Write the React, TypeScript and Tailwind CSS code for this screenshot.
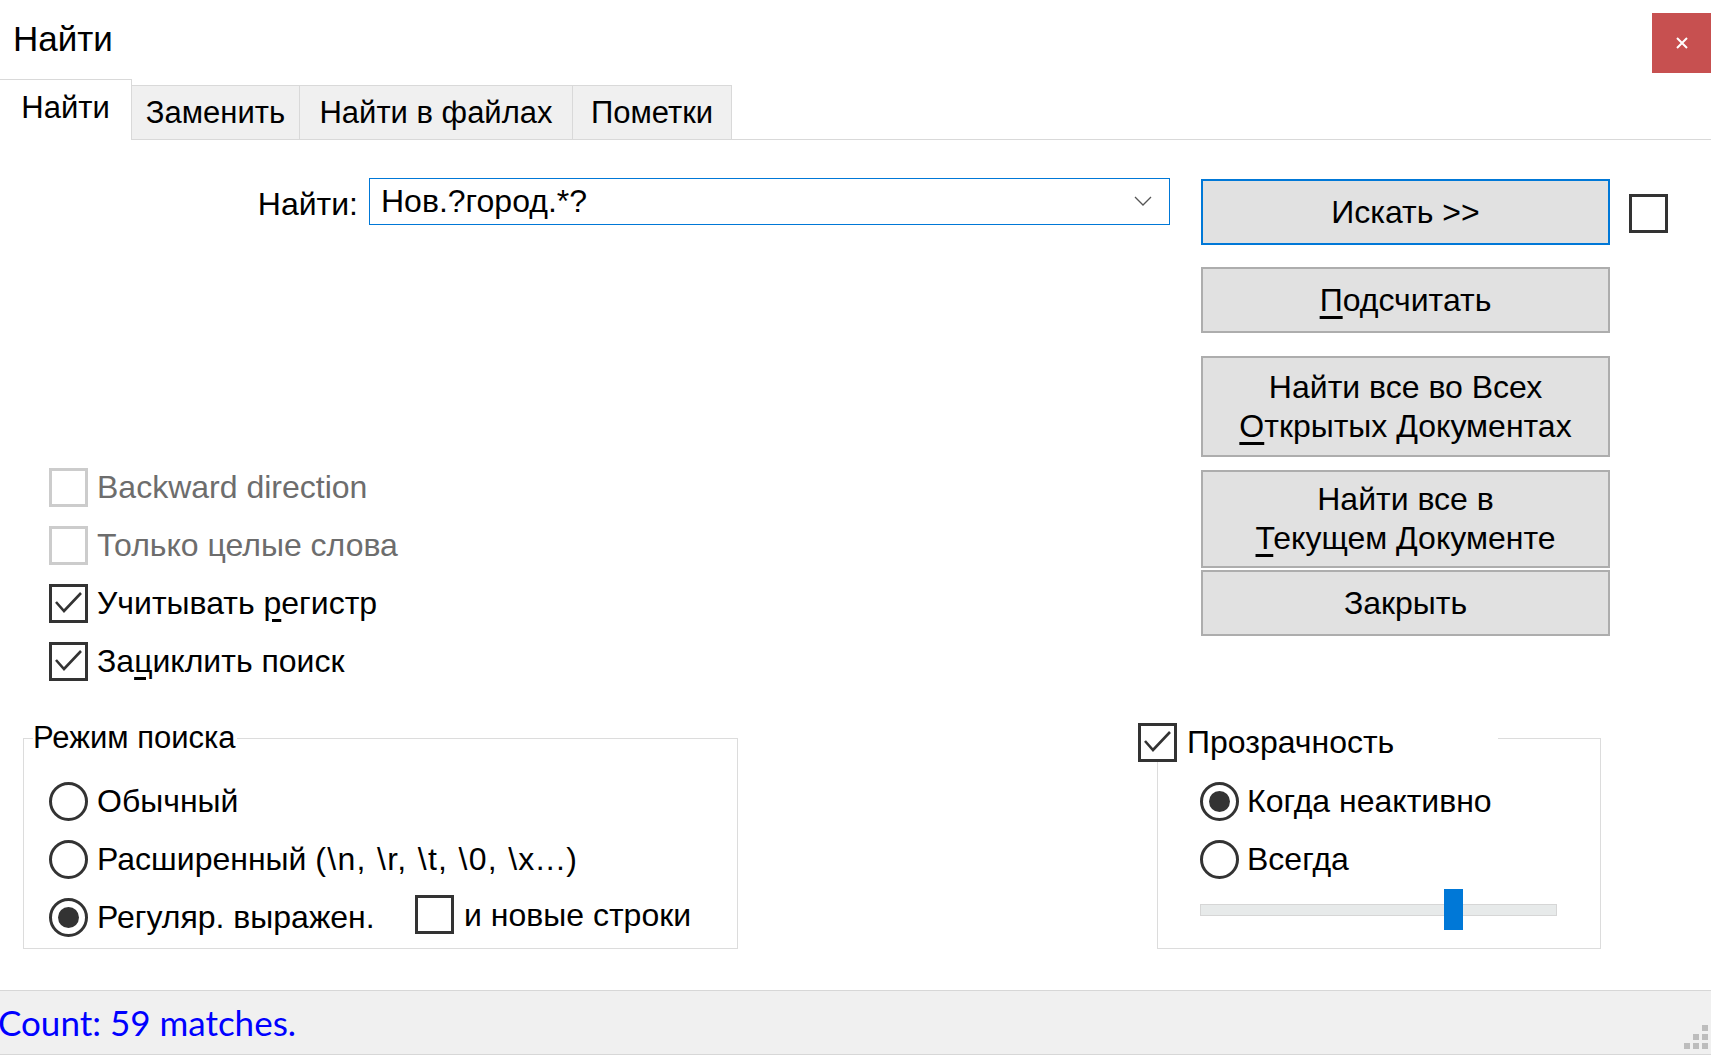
import React from "react";

type BoxProps = { checked?: boolean; disabled?: boolean };

const Check = ({ checked, disabled }: BoxProps) => (
  <span
    className={`flex h-[39px] w-[39px] shrink-0 items-center justify-center border-[3px] bg-white ${
      disabled ? "border-[#cccccc]" : "border-[#333333]"
    }`}
  >
    {checked && (
      <svg width="33" height="33" viewBox="0 0 33 33">
        <path d="M4 15 L12 24 L29 6" fill="none" stroke="#333333" strokeWidth="2.6" />
      </svg>
    )}
  </span>
);

const Radio = ({ on }: { on?: boolean }) => (
  <span className="flex h-[39px] w-[39px] shrink-0 items-center justify-center rounded-full border-[3px] border-[#333333] bg-white">
    {on && <span className="h-[21px] w-[21px] rounded-full bg-[#333333]" />}
  </span>
);

const Btn = ({ h, blue, children }: { h: string; blue?: boolean; children: React.ReactNode }) => (
  <div
    className={`flex w-[409px] flex-col items-center justify-center border-2 bg-[#e1e1e1] text-center leading-[39px] ${h} ${
      blue ? "border-[#0078d7]" : "border-[#adadad]"
    }`}
  >
    {children}
  </div>
);

const App = () => {
  return (
    <div className="relative flex h-[1055px] w-[1711px] flex-col overflow-hidden bg-white font-['Liberation_Sans',Arial,sans-serif] text-[32px] text-black">
      {/* title bar */}
      <div className="flex h-[79px] items-start justify-between">
        <div className="pl-[13px] pt-[18px] text-[35px] leading-[42px]">Найти</div>
        <div className="mt-[13px] flex h-[60px] w-[59px] items-center justify-center bg-[#c75050]">
          <svg width="12" height="12" viewBox="0 0 12 12">
            <path d="M1 1 L11 11 M11 1 L1 11" stroke="#ffffff" strokeWidth="2" />
          </svg>
        </div>
      </div>

      {/* tabs */}
      <div className="flex h-[61px] items-end text-[31px]">
        <div className="flex h-[61px] w-[132px] items-center justify-center border-r border-t border-[#d9d9d9] bg-white pb-[3px]">
          Найти
        </div>
        <div className="flex h-[55px] w-[168px] items-center justify-center border-b border-r border-t border-[#d9d9d9] bg-[#f0f0f0] pt-[2px]">
          Заменить
        </div>
        <div className="flex h-[55px] w-[273px] items-center justify-center border-b border-r border-t border-[#d9d9d9] bg-[#f0f0f0] pt-[2px]">
          Найти в файлах
        </div>
        <div className="flex h-[55px] w-[159px] items-center justify-center border-b border-r border-t border-[#d9d9d9] bg-[#f0f0f0] pt-[2px]">
          Пометки
        </div>
        <div className="h-px flex-1 bg-[#d9d9d9]" />
      </div>

      {/* search + buttons */}
      <div className="flex items-start pt-[34px]">
        <div className="w-[1201px] shrink-0">
          <div className="flex items-center">
            <div className="w-[358px] pt-[6px] text-right">Найти:</div>
            <div className="ml-[11px] flex h-[47px] w-[801px] items-center justify-between border border-[#0078d7] pl-[11px] pr-[17px]">
              <span>Нов.?город.*?</span>
              <svg width="18" height="10" viewBox="0 0 18 10">
                <path d="M1 1 L9 9 L17 1" fill="none" stroke="#555555" strokeWidth="1.3" />
              </svg>
            </div>
          </div>

          <div className="mt-[230px] flex flex-col pl-[49px]">
            <div className="flex h-[58px] items-center gap-[9px] text-[#6d6d6d]">
              <Check disabled />
              <span>Backward direction</span>
            </div>
            <div className="flex h-[58px] items-center gap-[9px] text-[#6d6d6d]">
              <Check disabled />
              <span>Только целые слова</span>
            </div>
            <div className="flex h-[58px] items-center gap-[9px]">
              <Check checked />
              <span>
                Учитывать <u className="underline-offset-[5px]">р</u>егистр
              </span>
            </div>
            <div className="flex h-[58px] items-center gap-[9px]">
              <Check checked />
              <span>
                За<u className="underline-offset-[5px]">ц</u>иклить поиск
              </span>
            </div>
          </div>
        </div>

        <div className="mt-[5px] flex flex-col">
          <Btn h="h-[66px]" blue>
            Искать &gt;&gt;
          </Btn>
          <div className="mt-[22px]">
            <Btn h="h-[66px]">
              <span>
                <u className="underline-offset-[5px]">П</u>одсчитать
              </span>
            </Btn>
          </div>
          <div className="mt-[23px]">
            <Btn h="h-[101px]">
              <span>Найти все во Всех</span>
              <span>
                <u className="underline-offset-[5px]">О</u>ткрытых Документах
              </span>
            </Btn>
          </div>
          <div className="mt-[13px]">
            <Btn h="h-[98px]">
              <span>Найти все в</span>
              <span>
                <u className="underline-offset-[5px]">Т</u>екущем Документе
              </span>
            </Btn>
          </div>
          <div className="mt-[2px]">
            <Btn h="h-[66px]">Закрыть</Btn>
          </div>
        </div>

        <div className="ml-[19px] mt-[20px]">
          <Check />
        </div>
      </div>

      {/* group boxes */}
      <div className="mt-[48px] flex">
        <div className="relative ml-[23px] h-[211px] w-[715px] border border-[#dcdcdc]">
          <span className="absolute left-[9px] top-[-21px] bg-white pr-[1px] text-[31px] leading-[40px]">Режим поиска</span>
          <div className="flex flex-col pl-[25px] pt-[33px]">
            <div className="flex h-[58px] items-center gap-[9px]">
              <Radio />
              <span>Обычный</span>
            </div>
            <div className="flex h-[58px] items-center gap-[9px]">
              <Radio />
              <span>
                Расширенный <span className="tracking-[1.3px]">(\n, \r, \t, \0, \x...)</span>
              </span>
            </div>
            <div className="flex h-[58px] items-center">
              <div className="flex w-[366px] items-center gap-[9px]">
                <Radio on />
                <span>Регуляр. выражен.</span>
              </div>
              <div className="mb-[6px] flex items-center gap-[10px]">
                <Check />
                <span className="mt-[2px]">и новые строки</span>
              </div>
            </div>
          </div>
        </div>

        <div className="relative ml-[419px] h-[211px] w-[444px] border border-[#dcdcdc]">
          <div className="absolute left-[-20px] top-[-17px] flex h-[40px] w-[360px] items-center gap-[10px] bg-white">
            <Check checked />
            <span>Прозрачность</span>
          </div>
          <div className="flex flex-col pl-[42px] pt-[33px]">
            <div className="flex h-[58px] items-center gap-[8px]">
              <Radio on />
              <span>Когда неактивно</span>
            </div>
            <div className="flex h-[58px] items-center gap-[8px]">
              <Radio />
              <span>Всегда</span>
            </div>
            <div className="relative mt-[1px] flex h-[41px] w-[357px] items-center">
              <div className="h-[12px] w-full border border-[#d6d6d6] bg-[#e7eaea]" />
              <div className="absolute left-[244px] top-0 h-[41px] w-[19px] bg-[#0078d7]" />
            </div>
          </div>
        </div>
      </div>

      {/* status bar */}
      <div className="mt-auto flex h-[65px] items-center justify-between border-b border-t border-[#d7d7d7] bg-[#f0f0f0]">
        <span className="-ml-[2px] font-['Lato',sans-serif] text-[35px] text-[#0000ff]">Count: 59 matches.</span>
        <svg className="mb-[5px] mr-[3px] self-end" width="24" height="24" viewBox="0 0 24 24">
          <rect x="18" y="0" width="6" height="6" fill="#bdbdbd" />
          <rect x="9" y="9" width="6" height="6" fill="#bdbdbd" />
          <rect x="18" y="9" width="6" height="6" fill="#bdbdbd" />
          <rect x="0" y="18" width="6" height="6" fill="#bdbdbd" />
          <rect x="9" y="18" width="6" height="6" fill="#bdbdbd" />
          <rect x="18" y="18" width="6" height="6" fill="#bdbdbd" />
        </svg>
      </div>
    </div>
  );
};

export default App;
